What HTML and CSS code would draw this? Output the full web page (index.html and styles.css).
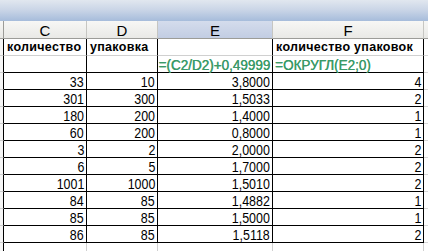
FILE: index.html
```html
<!DOCTYPE html>
<html lang="ru">
<head>
<meta charset="utf-8">
<title>Excel</title>
<link rel="stylesheet" href="styles.css">
</head>
<body>
<div class="topbar"></div>
<div class="sheet">
  <div class="hd rh"></div>
  <div class="hd">C</div>
  <div class="hd">D</div>
  <div class="hd sel">E</div>
  <div class="hd">F</div>
  <div class="hd last"></div>

  <div class="rh"></div>
  <div class="c t b1">количество</div>
  <div class="c t b1">упаковка</div>
  <div class="c t b1"></div>
  <div class="c t b1">количество упаковок</div>
  <div class="g b1"></div>

  <div class="rh"></div>
  <div class="c"></div>
  <div class="c"></div>
  <div class="c f r"><span>=(C2/D2)+0,49999</span></div>
  <div class="c f"><span class="l">=ОКРУГЛ(E2;0)</span></div>
  <div class="g"></div>

  <div class="rh"></div><div class="c r"><span>33</span></div><div class="c r"><span>10</span></div><div class="c r"><span>3,8000</span></div><div class="c r"><span>4</span></div><div class="g"></div>
  <div class="rh"></div><div class="c r"><span>301</span></div><div class="c r"><span>300</span></div><div class="c r"><span>1,5033</span></div><div class="c r"><span>2</span></div><div class="g"></div>
  <div class="rh"></div><div class="c r"><span>180</span></div><div class="c r"><span>200</span></div><div class="c r"><span>1,4000</span></div><div class="c r"><span>1</span></div><div class="g"></div>
  <div class="rh"></div><div class="c r"><span>60</span></div><div class="c r"><span>200</span></div><div class="c r"><span>0,8000</span></div><div class="c r"><span>1</span></div><div class="g"></div>
  <div class="rh"></div><div class="c r"><span>3</span></div><div class="c r"><span>2</span></div><div class="c r"><span>2,0000</span></div><div class="c r"><span>2</span></div><div class="g"></div>
  <div class="rh"></div><div class="c r"><span>6</span></div><div class="c r"><span>5</span></div><div class="c r"><span>1,7000</span></div><div class="c r"><span>2</span></div><div class="g"></div>
  <div class="rh"></div><div class="c r"><span>1001</span></div><div class="c r"><span>1000</span></div><div class="c r"><span>1,5010</span></div><div class="c r"><span>2</span></div><div class="g"></div>
  <div class="rh"></div><div class="c r"><span>84</span></div><div class="c r"><span>85</span></div><div class="c r"><span>1,4882</span></div><div class="c r"><span>1</span></div><div class="g"></div>
  <div class="rh"></div><div class="c r"><span>85</span></div><div class="c r"><span>85</span></div><div class="c r"><span>1,5000</span></div><div class="c r"><span>1</span></div><div class="g"></div>
  <div class="rh"></div><div class="c r"><span>86</span></div><div class="c r"><span>85</span></div><div class="c r"><span>1,5118</span></div><div class="c r"><span>2</span></div><div class="g"></div>

  <div class="rh"></div><div class="e"></div><div class="e"></div><div class="e"></div><div class="e"></div><div class="g"></div>
</div>
</body>
</html>
```
FILE: styles.css
```css
* { box-sizing: border-box; }
html, body { margin: 0; padding: 0; background: #fff; }
body { width: 428px; height: 251px; overflow: hidden; }

.topbar {
  height: 21px;
  background: linear-gradient(#e1e7ef, #cbd6e7 45%, #a6bcdb);
}

.sheet {
  display: grid;
  grid-template-columns: 4px 83px 71px 115px 151px 1fr;
  grid-auto-rows: 17px;
  grid-template-rows: 18px;
  font-family: "Liberation Sans", Arial, sans-serif;
  font-size: 15px;
  color: #000;
}

.hd {
  background: linear-gradient(#f7f7f5, #e9e9e6);
  border-right: 1px solid #c6c6c2;
  border-bottom: 1px solid #9c9c98;
  font-size: 15px;
  display: flex;
  align-items: center;
  justify-content: center;
  padding-top: 1px;
}
.hd.sel { background: linear-gradient(#d4dcec, #c2cde3); }
.hd.last { border-right: none; }

.rh {
  background: #f6f6f6;
  border-right: 1px solid #000;
  border-bottom: 1px solid #cfcfcf;
}
.hd.rh { border-right: 1px solid #9c9c98; border-bottom: 1px solid #9c9c98; background: linear-gradient(#f7f7f5, #e9e9e6); }

.c {
  border-right: 1px solid #000;
  border-bottom: 1px solid #000;
  display: flex;
  align-items: flex-end;
  line-height: 14px;
  padding: 0 2px 0 3px;
  white-space: nowrap;
}
.c span {
  display: inline-block;
  transform: scaleX(0.83);
  transform-origin: right bottom;
}
.c span.l { transform-origin: left bottom; }
.c.b1 { border-bottom: 1px solid #d0d0d0; }
.c.r { justify-content: flex-end; }
.c.t {
  font-weight: bold;
  font-size: 12.5px;
  letter-spacing: 0.3px;
  line-height: 15px;
}
.c.f {
  color: #3a9a68;
  font-size: 15px;
  padding-left: 2px;
  text-shadow: 0.4px 0 0 #3a9a68;
}
.c.f span { transform: scaleX(0.9); }

.g {
  border-bottom: 1px solid #d8d8d8;
}
.e {
  border-right: 1px solid #d0d0d0;
}
```
